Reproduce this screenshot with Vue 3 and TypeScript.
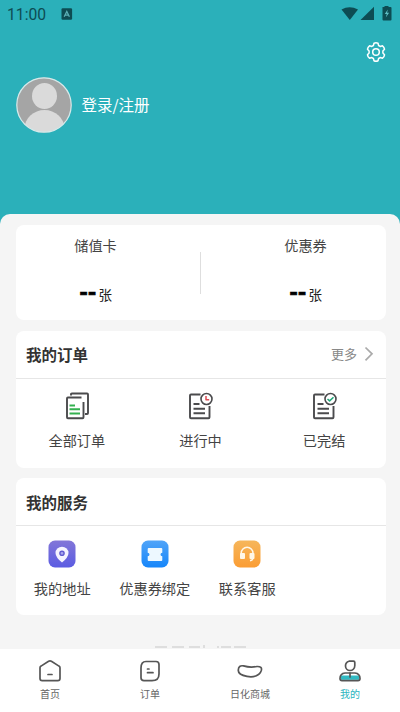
<script setup lang="ts">
interface Entry { id: string; label: string }

const balances: Entry[] = [
  { id: 'card', label: '储值卡' },
  { id: 'coupon', label: '优惠券' },
]
const orders: Entry[] = [
  { id: 'all', label: '全部订单' },
  { id: 'doing', label: '进行中' },
  { id: 'done', label: '已完结' },
]
const services: Entry[] = [
  { id: 'address', label: '我的地址' },
  { id: 'bind', label: '优惠券绑定' },
  { id: 'support', label: '联系客服' },
]
const tabs: Entry[] = [
  { id: 'home', label: '首页' },
  { id: 'order', label: '订单' },
  { id: 'mall', label: '日化商城' },
  { id: 'mine', label: '我的' },
]
const activeTab = 'mine'
</script>

<template>
  <div class="page">
    <div class="status">
      <span class="clock">11:00</span>
      <svg class="app-mark" width="12" height="12" viewBox="0 0 12 12">
        <rect x=".5" y=".2" width="10.6" height="11.6" rx="1.2" fill="#0d4c53" />
        <path d="M3.2 8.7 5.8 3.4 8.4 8.7M4.2 7.1h3.2" fill="none" stroke="#5aafb5" stroke-width="1.3" />
      </svg>
      <svg class="signals" width="54" height="16" viewBox="0 0 54 16">
        <path d="M2.500 3.6Q10.500-1.200 19 3.600L10.800 14Z" fill="#0d4c53" />
        <path d="M21.500 14 35 .8V14Z" fill="#0d4c53" />
        <path d="M43.500 1h2V0h4v1h2q1 0 1 1v11.500q0 1-1 1h-7q-1 0-1-1Z" fill="#0d4c53" />
        <path d="m48.800 3.500-3 4.500h2l-1 3.500 3.300-4.800h-2Z" fill="#5fc0c6" />
      </svg>
    </div>

    <header class="hero">
      <div class="tools">
        <svg width="20" height="20" viewBox="0 0 20 20" fill="none" stroke="#fff" stroke-width="1.500" stroke-linejoin="round">
          <path d="M8 1.300Q10 .4 12 1.300L12.600 3.500 14.200 4.400 16.500 3.800Q18.200 5.100 18.500 7.200L16.900 8.900V11.100L18.500 12.800Q18.200 14.900 16.500 16.200L14.200 15.600 12.600 16.500 12 18.700Q10 19.600 8 18.700L7.400 16.500 5.800 15.600 3.500 16.200Q1.800 14.900 1.500 12.800L3.100 11.100V8.900L1.500 7.200Q1.800 5.100 3.500 3.800L5.800 4.400 7.400 3.500Z" />
          <circle cx="10" cy="10" r="3.300" />
        </svg>
      </div>
      <div class="profile">
        <svg width="56" height="56" viewBox="0 0 56 56">
          <defs><clipPath id="face"><circle cx="28" cy="28" r="27" /></clipPath></defs>
          <circle cx="28" cy="28" r="27.500" fill="#a5a5a5" />
          <g clip-path="url(#face)" fill="#dadada">
            <ellipse cx="28.500" cy="19" rx="12.500" ry="13" />
            <ellipse cx="28.500" cy="51.500" rx="20" ry="18.500" />
          </g>
          <circle cx="28" cy="28" r="27.200" fill="none" stroke="#d5eaeb" stroke-width="1.200" />
        </svg>
        <span>登录/注册</span>
      </div>
    </header>

    <main class="sheet">
      <section class="card balances">
        <div v-for="b in balances" :key="b.id" class="balance">
          <span class="balance-name">{{ b.label }}</span>
          <span class="amount"><b>--</b><span>张</span></span>
        </div>
      </section>

      <section class="card group">
        <div class="head">
          <h2>我的订单</h2>
          <span class="more">更多
            <svg width="10" height="16" viewBox="0 0 10 16"><path d="m1.500 1.500 6.500 6.300-6.500 6.500" fill="none" stroke="#aaa" stroke-width="1.700" /></svg>
          </span>
        </div>
        <div class="orders">
          <div v-for="o in orders" :key="o.id" class="entry">
            <svg width="28" height="28" viewBox="0 0 28 28" fill="none" stroke="#4b4b4d" stroke-width="1.900" stroke-linejoin="round">
              <template v-if="o.id === 'all'">
                <path d="M8 3.500V2.400Q8 1.500 8.900 1.500H24.100Q25 1.500 25 2.400V21Q25 22 24.100 22H22" />
                <path d="M18.500 5.500H4.900Q4 5.500 4 6.400V25.300Q4 26.300 4.900 26.300H19.600Q20.500 26.300 20.500 25.300V10" />
                <path d="M6.500 13.500h5.500M6.500 17.300h10.500M6.500 21.500h10.500" stroke="#35b150" />
              </template>
              <template v-else>
                <path d="M14.500 2.500H5Q4 2.500 4 3.500V25.300Q4 26.300 5 26.300H22.500Q23.500 26.300 23.500 25.300V14" />
                <path d="M7.500 12h6M7.500 16.700h11.500M7.500 21.300h11.500" />
                <circle cx="20.500" cy="7" r="5.500" stroke-width="1.600" />
                <path v-if="o.id === 'doing'" d="M20 4V7.800h3.200" stroke="#dc4c53" stroke-width="1.500" />
                <path v-else d="m17.500 7 2.100 1.900 3.900-3.700" stroke="#20a779" stroke-width="1.500" />
              </template>
            </svg>
            <span>{{ o.label }}</span>
          </div>
        </div>
      </section>

      <section class="card group">
        <div class="head"><h2>我的服务</h2></div>
        <div class="services">
          <div v-for="s in services" :key="s.id" class="entry">
            <svg width="28" height="28" viewBox="0 0 28 28">
              <defs>
                <linearGradient :id="`tile-${s.id}`" x1="0" y1="0" x2="0" y2="1">
                  <stop :class="`${s.id}-from`" />
                  <stop offset="1" :class="`${s.id}-to`" />
                </linearGradient>
              </defs>
              <rect x=".5" y=".5" width="27" height="27" rx="6.500" :fill="`url(#tile-${s.id})`" />
              <template v-if="s.id === 'address'">
                <path d="M14 22.500Q7.500 17.300 7.500 13a6.500 6.300 0 0 1 13 0Q20.500 17.300 14 22.500Z" fill="#f5f4ff" />
                <circle cx="14" cy="13.300" r="2.100" fill="#aaa8ed" stroke="#615bd0" stroke-width="1.400" />
              </template>
              <path v-else-if="s.id === 'bind'" d="M7.700 8H20.300Q21.300 8 21.300 9V12.700A1.800 1.800 0 0 0 21.300 16.300V20Q21.300 21 20.300 21H7.700Q6.700 21 6.700 20V16.300A1.800 1.800 0 0 0 6.700 12.700V9Q6.700 8 7.700 8Z" fill="#edf8ff" />
              <template v-else>
                <path d="M8.200 14V13.200a5.900 5.900 0 0 1 11.800 0V17.500Q20 20.200 17 20.800" fill="none" stroke="#fff7e8" stroke-width="1.500" />
                <rect x="7" y="13" width="5" height="6" rx="1" fill="#fff7e8" />
                <rect x="16.500" y="13" width="5" height="6" rx="1" fill="#fff7e8" />
              </template>
            </svg>
            <span>{{ s.label }}</span>
          </div>
        </div>
      </section>

      <svg class="footer-mark" width="96" height="3" viewBox="0 0 96 3" fill="#dedede" aria-hidden="true">
        <path d="M2 1h12v2H2zM19 1h12v2H19zM36 1h11v2H36zM50 0h2v3h-2zM64 1h2v2h-2zM68 1h10v2H68zM81 1h12v2H81z" />
      </svg>
    </main>

    <nav class="tabbar">
      <div v-for="t in tabs" :key="t.id" class="tab" :class="{ active: t.id === activeTab }">
        <svg width="28" height="24" viewBox="0 0 28 24" fill="none" stroke="#565656" stroke-width="1.700" stroke-linejoin="round" stroke-linecap="round">
          <template v-if="t.id === 'home'">
            <path d="M4 8.800Q4 7.700 5 7.100L12.600 2.300Q14 1.500 15.400 2.300L23 7.100Q24 7.700 24 8.800V19.500Q24 21.700 21.800 21.700H6.200Q4 21.700 4 19.500Z" />
            <path d="M12 15.500h4" />
          </template>
          <template v-else-if="t.id === 'order'">
            <path d="M10 2.500H20Q23 2.500 23 5.500V15Q23 21.700 16 21.700H8Q5 21.700 5 18.700V9Q5 2.500 10 2.500Z" />
            <path d="M11.500 10h1.500M11.500 13.700h5.500" />
          </template>
          <path v-else-if="t.id === 'mall'" d="M2.300 11Q2.500 6 7.500 6.900C12 8.200 16 8.500 21 7.500Q26.500 7.300 25.300 11.500C23.500 17 17 18.700 11 17.400C6 16.500 2 15 2.300 11Z" />
          <template v-else>
            <path d="M5 16.500H23V20.800H5Z" fill="#30b9c2" stroke="none" />
            <path d="M13 2.200h4.500Q18.800 2.200 18.800 3.500V6.500C18.800 9.500 16.500 11.500 14 11.500S9.500 9.500 9.500 7Q9.500 3.200 13 2.200Z" />
            <path d="M9 14H19Q24 14.500 24 19.500Q24 21.700 22 21.700H6Q4 21.700 4 19.500Q4 14.500 9 14Z" />
            <path d="M14 14v4" />
          </template>
        </svg>
        <span>{{ t.label }}</span>
      </div>
    </nav>
  </div>
</template>

<style>
body { margin: 0; background: #f5f5f5; }
</style>

<style scoped>
.page {
  width: 400px;
  height: 712px;
  display: flex;
  flex-direction: column;
  overflow: hidden;
  background: #2bb0ba;
  color: #444;
  font-family: "Noto Sans CJK SC", sans-serif;
  font-size: 14.200px;
  line-height: 20px;
}
svg { display: block; flex: none; }
.status { height: 28px; box-sizing: border-box; padding: 0 7px; display: flex; align-items: center; }
.clock { width: 54px; padding-top: 1px; font-family: Roboto, sans-serif; font-size: 15.700px; color: #0d4c53; }
.signals { margin-left: auto; margin-top: -1px; }
.hero { height: 186px; flex: none; color: #fff; }
.tools { height: 49px; display: flex; justify-content: flex-end; padding: 14px 14px 0; box-sizing: border-box; }
.profile { display: flex; align-items: center; gap: 10px; padding-left: 15.500px; font-size: 15.500px; }
.profile span { margin-top: -2px; }
.sheet {
  flex: 1;
  min-height: 0;
  display: flex;
  flex-direction: column;
  padding: 11px 14px 0 16px;
  border-radius: 10px 10px 0 0;
  background: #f5f5f5;
}
.card { background: #fff; border-radius: 8px; flex: none; }
.balances { height: 95px; display: grid; grid-template-columns: 1fr 1fr; }
.balance { display: flex; flex-direction: column; align-items: center; padding-top: 10px; }
.balance:first-child { padding-right: 26px; background: linear-gradient(#dedede, #dedede) right 27px / 1px 42px no-repeat; }
.balance:last-child { padding-left: 24px; }
.amount { display: flex; align-items: baseline; gap: 2px; margin-top: 21px; color: #222; font-size: 13.500px; }
.amount b { color: #000; font-size: 22.500px; font-weight: 900; line-height: 28px; -webkit-text-stroke: .6px #000; }
.group { height: 137px; margin-top: 10.500px; }
.head { height: 47px; display: flex; align-items: center; justify-content: space-between; padding: 0 12px 0 10px; border-bottom: 1px solid #e6e6e6; }
h2 { margin: 0; font-size: 15.500px; font-weight: 600; color: #333; }
.more { display: flex; align-items: center; gap: 7px; color: #888; font-size: 13px; }
.orders { display: grid; grid-template-columns: repeat(3, 1fr); padding-top: 13px; margin-left: -1px; }
.entry { display: flex; flex-direction: column; align-items: center; gap: 10px; white-space: nowrap; }
.services { display: grid; grid-template-columns: repeat(4, 92.500px); padding-top: 14px; }
.footer-mark { margin: 30px 0 0 137px; }
.address-from { stop-color: #8276d8; }
.address-to { stop-color: #5b5ce2; }
.bind-from { stop-color: #50a4f8; }
.bind-to { stop-color: #1686fa; }
.support-from { stop-color: #f6b65b; }
.support-to { stop-color: #fb9d34; }
.tabbar { height: 63px; flex: none; display: grid; grid-template-columns: repeat(4, 1fr); background: #fff; }
.tab { display: flex; flex-direction: column; align-items: center; gap: 1px; padding-top: 10px; font-size: 10px; color: #666; }
.active { color: #2bb5c0; }
</style>
